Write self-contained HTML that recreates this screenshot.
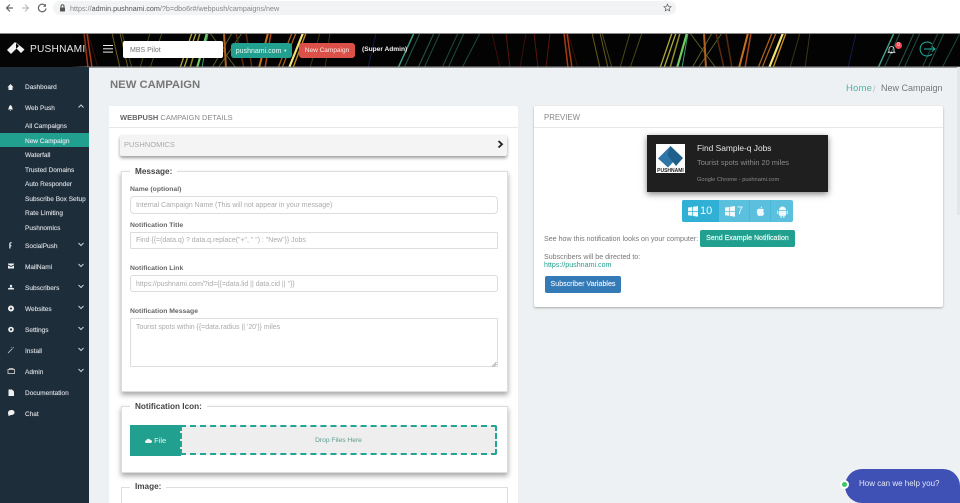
<!DOCTYPE html>
<html><head><meta charset="utf-8"><title>Pushnami</title>
<style>
html,body{margin:0;padding:0;width:960px;height:503px;overflow:hidden;background:#eef1f3;font-family:"Liberation Sans",sans-serif}
#w{position:relative;width:960px;height:503px;overflow:hidden;background:#eef1f3}
.a{position:absolute;white-space:nowrap}
.t{position:absolute;white-space:nowrap;line-height:10px;height:10px}
.side{left:25px;font-size:6.500px;color:#d4d9de;font-weight:400;-webkit-text-stroke:.15px #d4d9de;margin-top:1.500px}
.ic{position:absolute}
.lab{left:130px;font-size:6.800px;font-weight:700;color:#666;margin-top:1px}
.inp{position:absolute;left:130px;width:366px;box-sizing:content-box;background:#fff;border:1px solid #ddd;border-radius:3px}
.ph{left:136px;font-size:6.950px;color:#aaa;margin-top:1px}
.fs{position:absolute;left:121px;width:385px;background:#fff;border:1px solid #ddd;box-shadow:0 3px 5px rgba(0,0,0,.35)}
.leg{position:absolute;font-size:8.200px;font-weight:700;color:#444;background:#fff;padding:0 5px;left:130px;line-height:10px;white-space:nowrap}
</style></head><body><div id="w">

<!-- browser bar -->
<div class="a" style="left:0;top:0;width:960px;height:33px;background:#fff"></div>
<svg class="ic" style="left:0;top:0" width="60" height="16" viewBox="0 0 60 16" fill="none">
<path d="M13 8H7M10 4.500 6.500 8l3.500 3.500" stroke="#666" stroke-width="1.200"/>
<path d="M22 8h6M25 4.500 28.500 8 25 11.500" stroke="#bbb" stroke-width="1.200"/>
<path d="M45.500 6a3.800 3.800 0 1 0 .5 2.500" stroke="#666" stroke-width="1.200"/><path d="M46 3.800v3h-3z" fill="#666"/>
</svg>
<div class="a" style="left:53px;top:1px;width:623px;height:14px;background:#f1f3f4;border-radius:7px"></div>
<svg class="ic" style="left:59px;top:4px" width="7" height="8" viewBox="0 0 7 8"><rect x="1" y="3.500" width="5" height="4" rx=".5" fill="#555"/><path d="M2 3.500V2.300a1.500 1.500 0 0 1 3 0v1.200" fill="none" stroke="#555"/></svg>
<div class="t" style="left:70px;top:4px;font-size:7.200px;color:#888">https://<span style="color:#555">admin.pushnami.com</span>/?b=dbo6r#/webpush/campaigns/new</div>
<svg class="ic" style="left:663px;top:3px" width="9" height="9" viewBox="0 0 24 24"><path d="M12 3l2.700 6.200 6.800.6-5.100 4.500 1.500 6.700L12 17.500 6.100 21l1.500-6.700L2.500 9.800l6.800-.6z" fill="none" stroke="#666" stroke-width="2"/></svg>

<!-- header -->
<svg class="ic" style="left:0;top:33px" width="960" height="35" viewBox="0 0 960 35">
<defs><filter id="b" x="-5%" y="-5%" width="110%" height="110%"><feGaussianBlur stdDeviation=".35"/></filter>
<g id="tile" fill="none" filter="url(#b)">
<path d="M30 35 26 0M58 35 54 0M66 35 70 0" stroke="#5a1208" stroke-width="1"/>
<path d="M88 35 84 0M92 35 87 0" stroke="#a83a12" stroke-width="1.500"/>
<path d="M98 35 88 0M20 35 12 0M40 35 46 0" stroke="#3c0d08" stroke-width="1"/>
<path d="M120 35 112 0M128 35 120 0" stroke="#6d5a18" stroke-width="1"/>
<path d="M132 35 122 0M140 35 150 0M150 35 162 0" stroke="#4a4a14" stroke-width="1"/>
<path d="M180 35 192 0M184 35 196 0" stroke="#b0a83a" stroke-width="1.300"/>
<path d="M190 35 200 0" stroke="#8a8f2a" stroke-width="1.500"/>
<path d="M197 35 207 0" stroke="#6fcf60" stroke-width="2.200"/>
<path d="M202 35 208 0" stroke="#3e9e70" stroke-width="1"/>
<path d="M212 35 232 0M218 35 242 0M236 35 210 0" stroke="#56602a" stroke-width="1"/>
<path d="M226 35 224 0" stroke="#b5621c" stroke-width="2"/>
<path d="M244 35 236 0M252 35 246 0" stroke="#5a2c10" stroke-width="1.500"/>
<path d="M259 35 268 0" stroke="#c9711f" stroke-width="2"/>
<path d="M265 35 271 0" stroke="#a84a18" stroke-width="1.500"/>
<path d="M278 35 292 0M282 35 296 0" stroke="#b0641c" stroke-width="1.200"/>
<path d="M289 35 303 0" stroke="#f2e27a" stroke-width="2.200"/>
<path d="M293 35 306 0" stroke="#c88a24" stroke-width="1.400"/>
<path d="M310 35 320 0M325 35 330 0" stroke="#3a3514" stroke-width="1"/>
<path d="M368 35 376 0" stroke="#141c48" stroke-width="1"/>
<path d="M398 35 414 0" stroke="#3f9c85" stroke-width="1.500"/>
<path d="M404 35 420 0M418 35 434 0" stroke="#23584a" stroke-width="1"/>
<path d="M424 35 440 0M442 35 458 0M448 35 464 0M462 35 480 0" stroke="#1c4a3d" stroke-width="1"/>
</g></defs>
<rect width="960" height="35" fill="#030303"/>
<use href="#tile"/><use href="#tile" x="480"/>
<rect width="960" height="1" fill="#888"/><rect y="33.500" width="960" height="1.500" fill="#9a9a9a"/>
</svg>
<div class="a" style="left:0;top:34px;width:88px;height:33px;background:linear-gradient(90deg,#050505 80%,rgba(5,5,5,0))"></div>
<svg class="ic" style="left:6px;top:41px" width="20" height="15" viewBox="0 0 20 15"><path d="M9 1 1 9l4 4 8-8zM10 1.500l8.500 7-3.500 3.500-5-5z" fill="#f2f2f2"/></svg>
<div class="t" style="left:30px;top:45px;font-size:10.200px;color:#e8e8e8;letter-spacing:.2px">PUSHNAMI</div>
<div class="a" style="left:103px;top:45px;width:10px;height:1.200px;background:#eee;box-shadow:0 3.300px #eee,0 6.600px #eee"></div>
<div class="a" style="left:123px;top:41px;width:100px;height:17px;background:#fff;border-radius:2px"></div>
<div class="t" style="left:130px;top:45.500px;font-size:7px;color:#777">MBS Pilot</div>
<div class="t" style="left:231px;top:43px;width:61px;height:15px;line-height:15px;background:#22a08f;border-radius:3px;color:#e8f6f3;font-size:7px;text-align:center">pushnami.com <span style="font-size:4px;vertical-align:1px">▼</span></div>
<div class="t" style="left:299px;top:43px;width:56px;height:15px;line-height:15px;background:#db5049;border-radius:3px;color:#fbe9e7;font-size:6.500px;text-align:center">New Campaign</div>
<div class="t" style="left:362px;top:45px;font-size:6.600px;font-weight:700;color:#f2f2f2">(Super Admin)</div>
<svg class="ic" style="left:887px;top:45px" width="9" height="9" viewBox="0 0 9 9"><path d="M2 6.500V4a2.500 2.500 0 0 1 5 0v2.500l.8.8H1.200zM3.500 8h2" fill="none" stroke="#eee" stroke-width=".8"/></svg>
<div class="t" style="left:895px;top:42px;width:7px;height:7px;line-height:7px;border-radius:50%;background:#ef4b57;color:#fff;font-size:5px;text-align:center">0</div>
<svg class="ic" style="left:917px;top:40px" width="20" height="18" viewBox="0 0 20 18" fill="none" stroke="#1fb3a2" stroke-width="1"><path d="M15 4A7 7 0 1 0 15 14M7 9h11M15 6.500 18 9l-3 2.500"/></svg>

<!-- sidebar -->
<div class="a" style="left:0;top:67px;width:89px;height:436px;background:#1e2d3a"></div>
<div class="a" style="left:0;top:132.500px;width:89px;height:14.500px;background:#22a08f"></div>
<div class="t side" style="top:81px">Dashboard</div>
<div class="t side" style="top:102px">Web Push</div>
<div class="t side" style="top:120px">All Campaigns</div>
<div class="t side" style="top:135px;color:#eef">New Campaign</div>
<div class="t side" style="top:149px">Waterfall</div>
<div class="t side" style="top:164px">Trusted Domains</div>
<div class="t side" style="top:178px">Auto Responder</div>
<div class="t side" style="top:193px">Subscribe Box Setup</div>
<div class="t side" style="top:207px">Rate Limiting</div>
<div class="t side" style="top:222px">Pushnomics</div>
<div class="t side" style="top:240px">SocialPush</div>
<div class="t side" style="top:261px">MailNami</div>
<div class="t side" style="top:282px">Subscribers</div>
<div class="t side" style="top:303px">Websites</div>
<div class="t side" style="top:324px">Settings</div>
<div class="t side" style="top:345px">Install</div>
<div class="t side" style="top:366px">Admin</div>
<div class="t side" style="top:387px">Documentation</div>
<div class="t side" style="top:408px">Chat</div>
<svg class="ic" style="left:0;top:67px" width="89" height="360" viewBox="0 67 89 360">
<g fill="#f0f0f0">
<path d="M10.500 84 7.500 87.300H8.500V90H12.500V87.300H13.500z"/>
<path d="M8 109.500c1-1 .5-3.500 2.500-4.500 2 1 1.500 3.500 2.500 4.500zM9.700 110.300h1.600l-.8.8z"/>
<path d="M9.300 248.500V244c0-1.500 1-2 2.200-2v1.300c-.7 0-1 .1-1 .8v1h1l-.2 1.200h-.8v2.200z"/>
<path d="M8 263.500h6v1l-3 1.500L8 264.500zM8 265.500l3 1.500 3-1.500v3H8z"/>
<circle cx="11" cy="286" r="1.200"/><path d="M8 289.500h6v-1c-1-1.200-5-1.200-6 0z"/>
<circle cx="11" cy="308.500" r="3"/>
<circle cx="11" cy="329.500" r="2.800"/>
<path d="M8.500 389.500h3.500l2 2v4.500H8.500z"/>
<path d="M8 413c0-2 1.500-3 3.500-3s3 1 3 2.500-1.500 2.500-3.500 2.500l-2.500 1z"/>
</g>
<circle cx="11" cy="308.500" r="1" fill="#1e2d3a"/><circle cx="11" cy="329.500" r="1.100" fill="#1e2d3a"/>
<path d="M8 353 12.500 348.500M13 347l.5 1M11 347l.5.5" stroke="#ccc" stroke-width=".8" fill="none"/>
<path d="M8 369.500h6.500v4H8zM9.500 369.500v-1h3.500v1" stroke="#ddd" stroke-width=".8" fill="none"/>
<g fill="none" stroke="#ccd2d8" stroke-width="1">
<path d="M78.500 107.500 81 105l2.500 2.500"/>
<path d="M78.500 243 81 245.500 83.500 243"/>
<path d="M78.500 264 81 266.500 83.500 264"/>
<path d="M78.500 285 81 287.500 83.500 285"/>
<path d="M78.500 306 81 308.500 83.500 306"/>
<path d="M78.500 327 81 329.500 83.500 327"/>
<path d="M78.500 348 81 350.500 83.500 348"/>
<path d="M78.500 369 81 371.500 83.500 369"/>
</g>
</svg>

<!-- page head -->
<div class="t" style="left:110px;top:80px;font-size:11.300px;font-weight:700;color:#777;line-height:10px">NEW CAMPAIGN</div>
<div class="t" style="left:846px;top:84px;font-size:9.500px;color:#4db3a2;letter-spacing:.2px">Home</div>
<div class="t" style="left:873px;top:84px;font-size:9px;color:#bbb">/</div>
<div class="t" style="left:881px;top:83px;font-size:9px;color:#777">New Campaign</div>
<div class="a" style="left:957px;top:67px;width:3px;height:148px;background:#e3e6e8"></div>

<!-- left panel -->
<div class="a" style="left:109px;top:106px;width:409px;height:397px;background:#fff;border-radius:2px 2px 0 0"></div>
<div class="t" style="left:120px;top:113px;font-size:7.500px;color:#888"><b style="color:#666">WEBPUSH</b> CAMPAIGN DETAILS</div>
<div class="a" style="left:109px;top:127px;width:409px;height:1px;background:#e8e8e8"></div>
<div class="a" style="left:120px;top:135px;width:387px;height:21px;background:#f4f4f4;border-radius:2px;box-shadow:0 2px 3px rgba(0,0,0,.4)"></div>
<div class="t" style="left:124px;top:140px;font-size:7.500px;color:#aaa">PUSHNOMICS</div>
<svg class="ic" style="left:497px;top:140px" width="7" height="9" viewBox="0 0 7 9"><path d="M1.500 1 5 4.300 1.500 7.500" fill="none" stroke="#222" stroke-width="1.800"/></svg>

<div class="fs" style="top:171px;height:219px"></div>
<div class="leg" style="top:166.500px">Message:</div>
<div class="t lab" style="top:184px">Name (optional)</div>
<div class="inp" style="top:196px;height:16px;border-radius:4px"></div>
<div class="t ph" style="top:200px">Internal Campaign Name (This will not appear in your message)</div>
<div class="t lab" style="top:220px">Notification Title</div>
<div class="inp" style="top:232px;height:15px;border-radius:1px"></div>
<div class="t ph" style="top:235px">Find {{=(data.q) ? data.q.replace("+", " ") : "New"}} Jobs</div>
<div class="t lab" style="top:263px">Notification Link</div>
<div class="inp" style="top:275px;height:15px"></div>
<div class="t ph" style="top:279px">https://pushnami.com/?id={{=data.lid || data.cid || ''}}</div>
<div class="t lab" style="top:306px">Notification Message</div>
<div class="inp" style="top:318px;height:47px;border-radius:1px"></div>
<div class="t ph" style="top:322px">Tourist spots within {{=data.radius || '20'}} miles</div>
<svg class="ic" style="left:491px;top:361px" width="6" height="6" viewBox="0 0 6 6"><path d="M1 5.500 5.500 1M3 5.500 5.500 3" stroke="#888" stroke-width=".6"/></svg>

<div class="fs" style="top:406px;height:65px"></div>
<div class="leg" style="top:401.500px">Notification Icon:</div>
<div class="a" style="left:130px;top:425px;width:51px;height:30.500px;background:#22a08f"></div>
<div class="t" style="left:145px;top:435.500px;font-size:7.500px;color:#e8f6f3">
<svg width="7" height="5" viewBox="0 0 7 5" style="vertical-align:0"><path d="M1.500 5a1.400 1.400 0 0 1-.2-2.800A2.300 2.300 0 0 1 5.500 2a1.500 1.500 0 0 1 0 3z" fill="#f0f0f0"/></svg> File</div>
<div class="a" style="left:180px;top:425px;width:317px;height:30px;box-sizing:border-box;background:#eee;border:2px dashed #22a594;border-radius:2px"></div>
<div class="t" style="left:180px;top:435.500px;width:317px;text-align:center;font-size:6.700px;color:#5e9a90">Drop Files Here</div>

<div class="fs" style="top:487px;height:15px;border-bottom:0;box-shadow:none"></div>
<div class="leg" style="top:482px">Image:</div>

<!-- right panel -->
<div class="a" style="left:534px;top:106px;width:409px;height:201px;background:#fff;border-radius:2px;box-shadow:0 1px 2px rgba(0,0,0,.3)"></div>
<div class="t" style="left:544px;top:113px;font-size:7.800px;color:#888">PREVIEW</div>
<div class="a" style="left:534px;top:127px;width:409px;height:1px;background:#e8e8e8"></div>
<div class="a" style="left:647px;top:135px;width:181px;height:57px;background:#1f1f1f;box-shadow:0 2px 6px rgba(0,0,0,.5)"></div>
<svg class="ic" style="left:656px;top:144px" width="29" height="29" viewBox="0 0 29 29"><rect width="29" height="29" fill="#fff"/><path d="M14.500 2 2 14.500l10 9 9-9.500z" fill="#2e75a8"/><path d="M14.500 2 27 14l-7 8-8.500-11z" fill="#1f5f8c"/><rect y="23.500" width="29" height="5" fill="#fff"/><text x="14.500" y="28" text-anchor="middle" font-size="5" font-weight="700" fill="#222" font-family="Liberation Sans">PUSHNAMI</text></svg>
<div class="t" style="left:697px;top:143px;font-size:8.400px;color:#e6e6e6">Find Sample-q Jobs</div>
<div class="t" style="left:697px;top:158px;font-size:7.400px;color:#8a8a8a">Tourist spots within 20 miles</div>
<div class="t" style="left:697px;top:175px;font-size:5.700px;color:#8a8a8a">Google Chrome - pushnami.com</div>

<div class="a" style="left:682px;top:200px;width:111px;height:22px;background:#5bc0de;border-radius:2px"></div>
<div class="a" style="left:682px;top:200px;width:37px;height:22px;background:#31b0d5;border-radius:2px 0 0 2px"></div>
<div class="a" style="left:749px;top:200px;width:1px;height:22px;background:#46b8da"></div>
<div class="a" style="left:770px;top:200px;width:1px;height:22px;background:#46b8da"></div>
<svg class="ic" style="left:682px;top:200px" width="111" height="22" viewBox="0 0 111 22" fill="#f0f8fb">
<path d="M6 7.500 10 7v4H6zM10.700 6.900 16 6v5h-5.300zM6 11.700h4v4l-4-.5zM10.700 11.700H16v5l-5.300-.8z"/>
<path d="M43 7.500 47 7v4h-4zM47.700 6.900 53 6v5h-5.300zM43 11.700h4v4l-4-.5zM47.700 11.700H53v5l-5.300-.8z"/>
<path d="M76 9c1-.6 1.800 0 2.500 0s1.500-.6 2.500 0c.6.300 1 .8 1.100 1-1.300.8-1.100 2.500.2 3.100-.5 1.300-1.400 2.900-2.300 2.900-.6 0-.9-.4-1.500-.4s-1 .4-1.600.4c-1.500 0-3.200-5.300-1-7zM78.500 8.500c0-1 .8-1.800 1.700-2 .1 1-.7 2-1.700 2z"/>
<path d="M97 10a3.500 3.500 0 0 1 7 0zM97 10.700h7v4a1 1 0 0 1-1 1h-5a1 1 0 0 1-1-1zM95.300 10.700h1v3.500h-1zM104.700 10.700h1v3.500h-1zM98.500 15.700h1.200v2h-1.200zM101.300 15.700h1.200v2h-1.200z"/>
</svg>
<div class="t" style="left:700px;top:206px;font-size:11px;color:#eefafd">10</div>
<div class="t" style="left:737px;top:206px;font-size:11px;color:#eefafd">7</div>

<div class="t" style="left:544px;top:233.500px;font-size:7.100px;color:#777">See how this notification looks on your computer:</div>
<div class="t" style="left:700px;top:230px;width:95px;height:17px;line-height:17px;background:#22a08f;border-radius:2px;color:#eefaf7;font-size:7.050px;text-align:center;-webkit-text-stroke:.15px #eefaf7">Send Example Notification</div>
<div class="t" style="left:544px;top:252px;font-size:7.100px;color:#777">Subscribers will be directed to:</div>
<div class="t" style="left:544px;top:260px;font-size:7.100px;color:#22a08f">https://pushnami.com</div>
<div class="t" style="left:545px;top:276px;width:76px;height:17px;line-height:17px;background:#337ab7;border-radius:2px;color:#e6eff7;font-size:7.100px;text-align:center;-webkit-text-stroke:.15px #e6eff7">Subscriber Variables</div>

<!-- chat -->
<div class="a" style="left:845px;top:469px;width:115px;height:34px;background:#3f51b5;border-radius:17px 17px 0 17px"></div>
<div class="a" style="left:840px;top:480px;width:5px;height:5px;background:#43c463;border:2px solid #fff;border-radius:50%"></div>
<div class="t" style="left:859px;top:479px;font-size:8px;color:#e4e7f5">How can we help you?</div>
</div></body></html>
